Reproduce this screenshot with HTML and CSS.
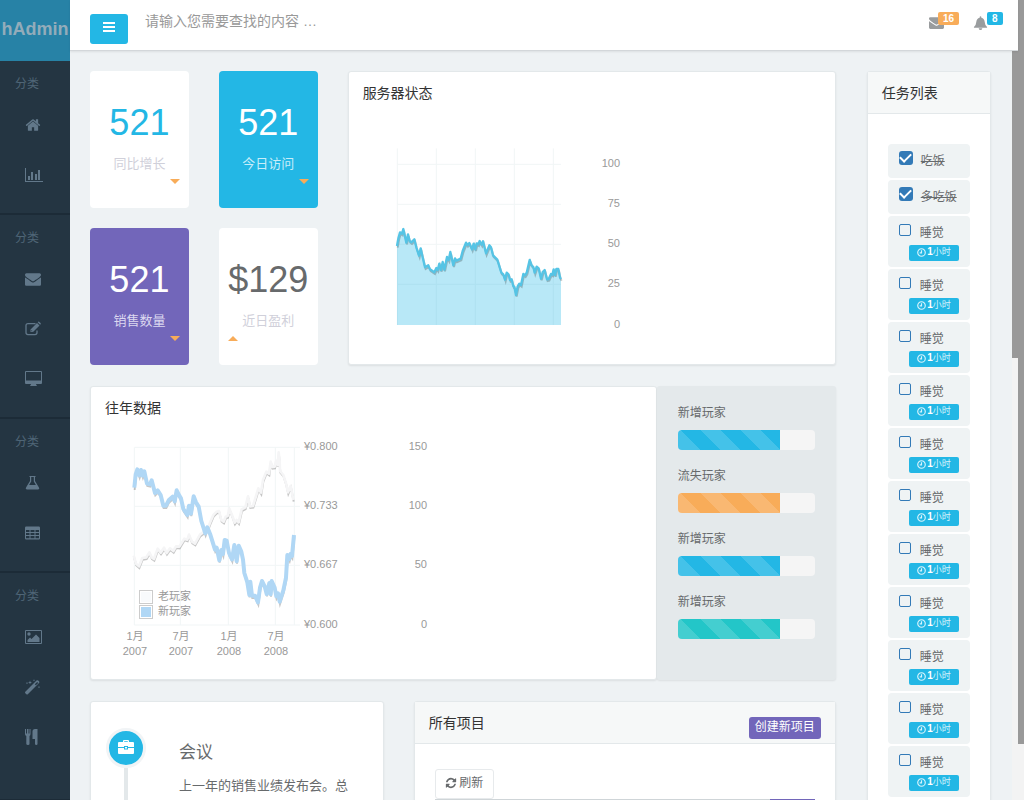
FILE: index.html
```html
<!DOCTYPE html>
<html lang="zh-CN">
<head>
<meta charset="utf-8">
<title>hAdmin</title>
<link rel="stylesheet" href="styles.css">
</head>
<body>
<svg class="defs" aria-hidden="true">
  <symbol id="i-home" viewBox="0 0 1792 1792"><path d="M1472 992v480q0 26-19 45t-45 19h-384v-384h-256v384h-384q-26 0-45-19t-19-45v-480q0-1 .5-3t.5-3l575-474 575 474q1 2 1 6zm223-69l-62 74q-8 9-21 11h-3q-13 0-21-7l-692-577-692 577q-12 8-24 7-13-2-21-11l-62-74q-8-10-7-23.5t11-21.5l719-599q32-26 76-26t76 26l244 204v-195q0-14 9-23t23-9h192q14 0 23 9t9 23v408l219 182q10 8 11 21.5t-7 23.5z"/></symbol>
  <symbol id="i-mail" viewBox="0 0 1792 1792"><path d="M1792 710v794q0 66-47 113t-113 47h-1472q-66 0-113-47t-47-113v-794q44 49 101 87 362 246 497 345 57 42 92.5 65.5t94.5 48 110 24.5h2q51 0 110-24.5t94.5-48 92.5-65.5q170-123 498-345 57-39 100-87zm0-294q0 79-49 151t-122 123q-376 261-468 325-10 7-42.5 31t-54 38.5-52 32.5-57.5 27-50 9h-2q-23 0-50-9t-57.5-27-52-32.5-54-38.5-42.5-31q-91-64-262-182.5t-205-142.5q-62-42-117-115.5t-55-136.5q0-78 41.5-130t118.5-52h1472q65 0 112.5 47t47.5 113z"/></symbol>
  <symbol id="i-refresh" viewBox="0 0 1792 1792"><path d="M1639 1056q0 5-1 7-64 268-268 434.5t-478 166.5q-146 0-282.5-55t-243.5-157l-129 129q-19 19-45 19t-45-19-19-45v-448q0-26 19-45t45-19h448q26 0 45 19t19 45-19 45l-137 137q71 66 161 102t187 36q134 0 250-65t186-179q11-17 53-117 8-23 30-23h192q13 0 22.5 9.5t9.5 22.5zm25-800v448q0 26-19 45t-45 19h-448q-26 0-45-19t-19-45 19-45l138-138q-148-137-349-137-134 0-250 65t-186 179q-11 17-53 117-8 23-30 23h-199q-13 0-22.5-9.5t-9.5-22.5v-7q65-268 270-434.5t480-166.5q146 0 284 55.5t245 156.5l130-129q19-19 45-19t45 19 19 45z"/></symbol>
  <symbol id="i-chart" viewBox="0 0 18 16"><path d="M0 1h1v13h17v1H0zM3 9h2v4H3zM6 5h2v8H6zM10 7h2v6h-2zM13 3h2v10h-2z"/></symbol>
  <symbol id="i-edit" viewBox="0 0 18 16"><path d="M10.500 2.600H3Q1 2.600 1 4.600v7q0 2 2 2h7q2 0 2-2v-2" fill="none" stroke="currentColor" stroke-width="1.300"/><path fill-rule="evenodd" d="M5.500 8.500L12 2l2.500 2.500L8 11H5.500zM12.700 1.300l.5-.5q.6-.4 1.200.1l1.200 1.200q.5.600 0 1.200l-.5.500zM6.300 9v1.200h1.400z"/></symbol>
  <symbol id="i-desktop" viewBox="0 0 18 16"><path fill-rule="evenodd" d="M1 0h15q1 0 1 1v11q0 1-1 1h-5l.5 1.500h.5V15H5v-.5h.5L6 13H1q-1 0-1-1V1q0-1 1-1zm0 1v8.500h15V1z"/></symbol>
  <symbol id="i-flask" viewBox="0 0 16 16"><path fill-rule="evenodd" d="M4.500 1h6v1H10v4l3.800 6.300q1.200 2.200-1 2.200H2.200q-2.200 0-1-2.200L5 6V2h-.5zM6.200 2v4.400L4.100 10h6.800L8.800 6.400V2z"/></symbol>
  <symbol id="i-table" viewBox="0 0 16 16"><path fill-rule="evenodd" d="M1.200 1.500h12.600q1.200 0 1.200 1.200v10.600q0 1.200-1.200 1.200H1.200Q0 14.500 0 13.300V2.700q0-1.200 1.200-1.200zM1 5v2h3.500V5zm4.500 0v2h4V5zm5 0v2H14V5zM1 8v2h3.500V8zm4.500 0v2h4V8zm5 0v2H14V8zM1 11v2.300h3.500V11zm4.500 0v2.300h4V11zm5 0v2.300H14V11z"/></symbol>
  <symbol id="i-image" viewBox="0 0 18 16"><path fill-rule="evenodd" d="M1 1h15q1 0 1 1v12q0 1-1 1H1q-1 0-1-1V2q0-1 1-1zm0 1v12h15V2z"/><path d="M2.500 13v-2L5 8.500 6.500 10l4.500-4.500 3.500 3.500v4z"/><circle cx="4" cy="5" r="1.700"/></symbol>
  <symbol id="i-magic" viewBox="0 0 16 16"><path fill-rule="evenodd" d="M.3 12.800L11.500 1.500q.9-.7 1.700 0l.8.800q.7.800 0 1.700L2.800 15.300q-.7.600-1.400 0l-1.100-1.100q-.6-.7 0-1.400zM9.800 5.300l1 1 2.400-2.400-1-1z"/><path d="M5 1.500l.5 1.500 1.500.5L5.500 4 5 5.500 4.500 4 3 3.500 4.500 3zM9 0l.3.900.9.300-.9.300L9 2.400l-.3-.9-.9-.3.9-.3zM2 3l.3.800.8.300-.8.300L2 5.200l-.3-.8-.8-.3.8-.3zM14 7l.3.800.8.300-.8.300-.3.800-.3-.8-.8-.3.8-.3z"/></symbol>
  <symbol id="i-cutlery" viewBox="0 0 16 16"><path d="M0 0h1v4.500h1V0h1.500v4.500h1V0h1v5q0 1.500-1 2v8q0 1-1.500 1T1.300 15V7Q0 6.500 0 5zM10 0h2.500v15q0 1-1.200 1T10 15v-5H7.500V2.500Q7.500 0 10 0z"/></symbol>
  <symbol id="i-bell" viewBox="0 0 16 16"><path d="M8 .8q.9 0 .9 1v.5q3.300.7 3.600 4.700.2 3.600 2.500 5.300v.7H1v-.7Q3.300 10.600 3.500 7q.3-4 3.600-4.700v-.5q0-1 .9-1zM6 13.500h4Q9.500 15.500 8 15.500T6 13.500z"/></symbol>
  <symbol id="i-case" viewBox="0 0 16 14"><path fill-rule="evenodd" d="M5 2V1q0-1 1-1h4q1 0 1 1v1h4q1 0 1 1v4h-6V6H6v1H0V3q0-1 1-1zm1.200 0h3.600v-.8H6.200zM0 8h6v1.500h4V8h6v5q0 1-1 1H1q-1 0-1-1zm7-1h2v1.500H7z"/></symbol>
  <symbol id="i-clock" viewBox="0 0 10 10"><path d="M5 2.500V5.500H3M5 .8a4.200 4.200 0 1 1 0 8.400a4.200 4.200 0 1 1 0-8.400z" fill="none" stroke="currentColor" stroke-width="1.300"/></symbol>
  <symbol id="i-bars" viewBox="0 0 12 10"><path d="M0 0h12v2H0zM0 4h12v2H0zM0 8h12v2H0z"/></symbol>
</svg>

<div class="app">
  <nav class="sidebar">
    <div class="logo">hAdmin</div>
    <section class="group"><h2>分类</h2>
      <a href="#" aria-label="主页"><svg><use href="#i-home"/></svg></a>
      <a href="#" aria-label="统计图表"><svg class="wide"><use href="#i-chart"/></svg></a></section>
    <section class="group"><h2>分类</h2>
      <a href="#" aria-label="信箱"><svg><use href="#i-mail"/></svg></a>
      <a href="#" aria-label="表单"><svg class="wide"><use href="#i-edit"/></svg></a>
      <a href="#" aria-label="页面"><svg class="wide"><use href="#i-desktop"/></svg></a></section>
    <section class="group"><h2>分类</h2>
      <a href="#" aria-label="UI元素"><svg><use href="#i-flask"/></svg></a>
      <a href="#" aria-label="表格"><svg><use href="#i-table"/></svg></a></section>
    <section class="group"><h2>分类</h2>
      <a href="#" aria-label="相册"><svg class="wide"><use href="#i-image"/></svg></a>
      <a href="#" aria-label="动画"><svg><use href="#i-magic"/></svg></a>
      <a href="#" aria-label="工具"><svg><use href="#i-cutlery"/></svg></a></section>
  </nav>

  <div class="main">
    <header class="topbar">
      <button class="menu-btn" aria-label="菜单"><svg><use href="#i-bars"/></svg></button>
      <input class="search" type="text" placeholder="请输入您需要查找的内容 …" aria-label="搜索">
      <a class="notice" href="#" aria-label="信件"><svg><use href="#i-mail"/></svg><span class="count orange">16</span></a>
      <a class="notice" href="#" aria-label="通知"><svg><use href="#i-bell"/></svg><span class="count blue">8</span></a>
    </header>

    <div class="body">
      <main class="content">
        <div class="left">
          <div class="overview">
            <div class="stat s-white"><strong>521</strong><span>同比增长</span><i class="caret down"></i></div>
            <div class="stat s-blue"><strong>521</strong><span>今日访问</span><i class="caret down"></i></div>
            <section class="panel server">
              <h3 class="title">服务器状态</h3>
              <svg class="chart server-chart" width="250" height="200">
                <g transform="translate(-40 -80) scale(.33333)">
                  <path class="grid" d="M172 265V795M289 265V795M406 265V795M523 265V795M640 265V795M172 313H663M172 433H663M172 553H663M172 673H663"/>
                  <path class="area" d="M171 558L175 535 180 517 186 521 190 507 195 530 199 548 204 523 209 543 214 547 223 538 229 562 237 587 242 565 248 592 255 622 265 616 270 628 283 637 289 624 293 630 298 611 303 630 308 606 313 629 321 591 326 600 331 576 340 616 345 595 349 602 362 596 368 573 378 548 382 555 388 549 396 568 401 551 406 568 410 550 415 553 419 543 425 554 429 544 438 580 448 556 453 562 459 586 472 599 484 638 490 643 495 659 500 638 506 644 510 660 515 658 520 679 523 680 528 705 533 679 538 671 543 675 550 642 555 646 560 638 569 600 575 616 580 621 584 638 590 620 596 625 603 656 608 636 614 630 621 658 626 657 633 642 637 644 641 628 645 645 649 627 655 627 660 652 663 657V795H171z"/>
                  <path class="shade" transform="translate(2 5)" d="M171 558L175 535 180 517 186 521 190 507 195 530 199 548 204 523 209 543 214 547 223 538 229 562 237 587 242 565 248 592 255 622 265 616 270 628 283 637 289 624 293 630 298 611 303 630 308 606 313 629 321 591 326 600 331 576 340 616 345 595 349 602 362 596 368 573 378 548 382 555 388 549 396 568 401 551 406 568 410 550 415 553 419 543 425 554 429 544 438 580 448 556 453 562 459 586 472 599 484 638 490 643 495 659 500 638 506 644 510 660 515 658 520 679 523 680 528 705 533 679 538 671 543 675 550 642 555 646 560 638 569 600 575 616 580 621 584 638 590 620 596 625 603 656 608 636 614 630 621 658 626 657 633 642 637 644 641 628 645 645 649 627 655 627 660 652 663 657"/>
                  <path class="line cyan" d="M171 558L175 535 180 517 186 521 190 507 195 530 199 548 204 523 209 543 214 547 223 538 229 562 237 587 242 565 248 592 255 622 265 616 270 628 283 637 289 624 293 630 298 611 303 630 308 606 313 629 321 591 326 600 331 576 340 616 345 595 349 602 362 596 368 573 378 548 382 555 388 549 396 568 401 551 406 568 410 550 415 553 419 543 425 554 429 544 438 580 448 556 453 562 459 586 472 599 484 638 490 643 495 659 500 638 506 644 510 660 515 658 520 679 523 680 528 705 533 679 538 671 543 675 550 642 555 646 560 638 569 600 575 616 580 621 584 638 590 620 596 625 603 656 608 636 614 630 621 658 626 657 633 642 637 644 641 628 645 645 649 627 655 627 660 652 663 657"/>
                </g>
                <g class="end"><text x="240" y="27">100</text><text x="240" y="67">75</text><text x="240" y="107">50</text><text x="240" y="147">25</text><text x="240" y="188">0</text></g>
              </svg>
            </section>
            <div class="stat s-purple"><strong>521</strong><span>销售数量</span><i class="caret down"></i></div>
            <div class="stat s-white s-grey"><strong>$129</strong><span>近日盈利</span><i class="caret up"></i></div>
          </div>

          <div class="history">
            <section class="panel years">
              <h3 class="title">往年数据</h3>
              <svg class="chart years-chart" width="330" height="232">
                <g transform="translate(-20 -45) scale(.33333)">
                  <path class="grid" d="M133 187V720M271 187V720M415 187V720M556 187V720M613 187V720M133 187H630M133 364H630M133 541H630M133 720H630"/>
                  <path class="shade" transform="translate(1 5)" d="M131 512L138 536 147 544 157 519 169 517 178 502 185 517 192 522 203 491 212 503 222 488 230 504 240 490 250 498 258 484 268 485 283 461 292 464 297 449 306 470 315 476 330 449 342 440 352 434 360 413 370 390 380 380 387 378 394 405 401 410 407 395 413 393 418 371 426 390 434 413 440 405 446 412 455 373 466 367 474 334 480 364 489 363 500 327 505 310 513 323 519 285 529 260 537 266 542 230 547 246 554 245 558 228 563 240 566 206 570 258 580 270 588 295 594 322 602 303 610 345"/>
                  <path class="line pale" d="M131 512L138 536 147 544 157 519 169 517 178 502 185 517 192 522 203 491 212 503 222 488 230 504 240 490 250 498 258 484 268 485 283 461 292 464 297 449 306 470 315 476 330 449 342 440 352 434 360 413 370 390 380 380 387 378 394 405 401 410 407 395 413 393 418 371 426 390 434 413 440 405 446 412 455 373 466 367 474 334 480 364 489 363 500 327 505 310 513 323 519 285 529 260 537 266 542 230 547 246 554 245 558 228 563 240 566 202 569 230 570 258 580 270 588 295 594 322 602 303 610 345"/>
                  <path class="shade" transform="translate(1 7)" d="M133 308L137 268 142 253 148 271 153 255 158 272 163 259 171 296 180 298 185 286 195 324 203 316 212 330 220 362 228 362 236 346 248 335 254 349 260 316 268 332 273 340 280 372 292 390 297 362 303 386 311 334 318 352 326 365 334 408 346 445 352 427 360 446 375 494 380 488 388 526 394 495 399 507 404 465 410 467 417 504 426 523 433 480 440 529 446 482 454 500 459 524 463 564 472 592 478 630 481 590 486 632 495 632 504 652 510 608 516 588 524 604 530 627 538 594 542 628 545 588 554 608 559 634 564 625 569 650 580 616 588 578 592 510 598 522 602 506 606 513 612 450"/>
                  <path class="line sky" d="M133 308L137 268 142 253 148 271 153 255 158 272 163 259 171 296 180 298 185 286 195 324 203 316 212 330 220 362 228 362 236 346 248 335 254 349 260 316 268 332 273 340 280 372 292 390 297 362 303 386 311 334 318 352 326 365 334 408 346 445 352 427 360 446 375 494 380 488 388 526 394 495 399 507 404 465 410 467 417 504 426 523 433 480 440 529 446 482 454 500 459 524 463 564 472 592 478 630 481 590 486 632 495 632 504 652 510 608 516 588 524 604 530 627 538 594 542 628 545 588 554 608 559 634 564 625 569 650 580 616 588 578 592 510 598 522 602 506 606 513 612 450"/>
                </g>
                <rect class="key" x="29.500" y="160.500" width="13" height="13"/><rect class="key" x="29.500" y="175.500" width="13" height="13"/>
                <rect class="key-pale" x="31" y="162" width="10" height="10"/><rect class="key-sky" x="31" y="177" width="10" height="10"/>
                <text class="serif" x="48" y="170">老玩家</text><text class="serif" x="48" y="185">新玩家</text>
                <g class="mid"><text x="25" y="210">1月</text><text x="25" y="225">2007</text><text x="71" y="210">7月</text><text x="71" y="225">2007</text><text x="119" y="210">1月</text><text x="119" y="225">2008</text><text x="166" y="210">7月</text><text x="166" y="225">2008</text></g>
                <text x="194" y="20">¥0.800</text><text x="194" y="79">¥0.733</text><text x="194" y="138">¥0.667</text><text x="194" y="198">¥0.600</text>
                <g class="end"><text x="317" y="20">150</text><text x="317" y="79">100</text><text x="317" y="138">50</text><text x="317" y="198">0</text></g>
              </svg>
            </section>
            <section class="players">
              <p>新增玩家</p><div class="track"><div class="fill blue" style="width:75%"></div></div>
              <p>流失玩家</p><div class="track"><div class="fill orange" style="width:75%"></div></div>
              <p>新增玩家</p><div class="track"><div class="fill blue" style="width:75%"></div></div>
              <p>新增玩家</p><div class="track"><div class="fill teal" style="width:75%"></div></div>
            </section>
          </div>

          <div class="lower">
            <section class="panel timeline">
              <div class="rail"><div class="dot"><svg><use href="#i-case"/></svg></div><div class="stem"></div></div>
              <div class="event"><h2>会议</h2><p>上一年的销售业绩发布会。总</p></div>
            </section>
            <section class="panel projects">
              <div class="panel-head"><h3 class="title">所有项目</h3><button class="create">创建新项目</button></div>
              <div class="project-body">
                <button class="refresh"><svg><use href="#i-refresh"/></svg>刷新</button>
                <div class="find"><input type="text" aria-label="项目名称"><button aria-label="搜索项目"></button></div>
              </div>
            </section>
          </div>
        </div>

        <aside class="panel tasks">
          <div class="panel-head"><h3 class="title">任务列表</h3></div>
          <ul>
            <li class="done"><label><input type="checkbox" checked><span>吃饭</span></label></li>
            <li class="done"><label><input type="checkbox" checked><span>多吃饭</span></label></li>
            <li><label><input type="checkbox"><span>睡觉</span></label><small><svg><use href="#i-clock"/></svg><b>1</b>小时</small></li>
            <li><label><input type="checkbox"><span>睡觉</span></label><small><svg><use href="#i-clock"/></svg><b>1</b>小时</small></li>
            <li><label><input type="checkbox"><span>睡觉</span></label><small><svg><use href="#i-clock"/></svg><b>1</b>小时</small></li>
            <li><label><input type="checkbox"><span>睡觉</span></label><small><svg><use href="#i-clock"/></svg><b>1</b>小时</small></li>
            <li><label><input type="checkbox"><span>睡觉</span></label><small><svg><use href="#i-clock"/></svg><b>1</b>小时</small></li>
            <li><label><input type="checkbox"><span>睡觉</span></label><small><svg><use href="#i-clock"/></svg><b>1</b>小时</small></li>
            <li><label><input type="checkbox"><span>睡觉</span></label><small><svg><use href="#i-clock"/></svg><b>1</b>小时</small></li>
            <li><label><input type="checkbox"><span>睡觉</span></label><small><svg><use href="#i-clock"/></svg><b>1</b>小时</small></li>
            <li><label><input type="checkbox"><span>睡觉</span></label><small><svg><use href="#i-clock"/></svg><b>1</b>小时</small></li>
            <li><label><input type="checkbox"><span>睡觉</span></label><small><svg><use href="#i-clock"/></svg><b>1</b>小时</small></li>
            <li><label><input type="checkbox"><span>睡觉</span></label><small><svg><use href="#i-clock"/></svg><b>1</b>小时</small></li>
          </ul>
        </aside>
      </main>
      <div class="scroll inner"><div class="thumb"></div></div>
    </div>
  </div>
  <div class="scroll outer"><div class="thumb"></div></div>
</div>
</body>
</html>
```

FILE: styles.css
```css
* { box-sizing: border-box; }
body {
  margin: 0;
  font: 13px/18px "Liberation Sans", "Noto Sans CJK SC", sans-serif;
  color: #676a6c;
  background: #eef2f4;
}
h2, h3, p, ul { margin: 0; padding: 0; font-weight: 400; }
button, input { font: inherit; margin: 0; }
button { border: 0; padding: 0; cursor: pointer; }
svg { fill: currentColor; flex: none; }
.defs { display: none; }

.app { display: flex; height: 100vh; overflow: hidden; }

/* sidebar */
.sidebar { flex: 0 0 70px; background: #243542; overflow: hidden; }
.logo {
  height: 61px;
  background: #2782a6;
  color: #93acba;
  font-size: 18px;
  font-weight: 700;
  line-height: 58px;
  text-align: center;
}
.group { padding-bottom: 13px; border-bottom: 2px solid #1c2b37; }
.group:last-child { padding-bottom: 37px; }
.group h2 { height: 39px; padding: 14px 0 0 15px; font-size: 12px; line-height: 18px; color: #4f6576; }
.group a { display: flex; align-items: center; height: 50px; padding-left: 25px; color: #62788a; }
.group svg { width: 16px; height: 16px; }
.group svg.wide { width: 18px; }

/* top bar */
.main { flex: 1; min-width: 0; display: flex; flex-direction: column; }
.topbar {
  display: flex;
  align-items: flex-start;
  height: 51px;
  padding: 0 15px 0 20px;
  background: #fff;
  border-bottom: 1px solid #d3d7da;
  box-shadow: 0 1px 2px rgba(0, 0, 0, .08);
  z-index: 1;
}
.menu-btn { width: 38px; height: 30px; margin-top: 14px; padding-bottom: 2px; border-radius: 3px; background: #23b7e5; color: #fff; }
.menu-btn svg { width: 12px; height: 10px; }
.search { flex: 1; min-width: 0; height: 42px; padding: 0 0 0 17px; border: 0; outline: 0; font-size: 14px; background: none; }
.search::placeholder { color: #999; opacity: 1; }
.notice { position: relative; width: 44px; height: 30px; margin-top: 15px; color: #999c9e; }
.notice + .notice { width: 30px; }
.notice svg { width: 15px; height: 15px; }
.notice + .notice svg { width: 15px; height: 16px; }
.count { position: absolute; left: 9px; top: -3px; padding: 0 5px; border-radius: 2px; color: #fff; font-size: 10px; font-weight: 700; line-height: 13px; }
.notice + .notice .count { left: 14px; }
.blue { background-color: #23b7e5; }
.orange { background-color: #f8ac59; }
.teal { background-color: #23c6c8; }

/* scroll indicators */
.body { flex: 1; min-height: 0; display: flex; }
.scroll { flex: 0 0 6px; background: #f3f3f3; }
.thumb { background: #999; }
.outer .thumb { height: 93%; }
.inner .thumb { height: 41%; }

/* content grid */
.content {
  flex: 1;
  min-width: 0;
  display: grid;
  grid-template-columns: 6fr 1fr;
  gap: 31px;
  align-items: start;
  padding: 20px 21px 0 20px;
  overflow: hidden;
}
.left { display: grid; gap: 21px; min-width: 0; }
.panel { background: #fff; border: 1px solid #e3e8ea; border-radius: 3px; box-shadow: 0 1px 2px rgba(0, 0, 0, .08); min-width: 0; }
.title { font-size: 14px; line-height: 20px; color: #333; }
.overview { display: grid; grid-template-columns: 33fr 33fr 163fr; grid-template-rows: 137px 137px; gap: 20px 30px; }
.server { grid-column: 3; grid-row: 1 / 3; overflow: hidden; }
.server > .title, .years > .title { padding: 11px 0 0 14px; }

.stat { display: flex; flex-direction: column; align-items: center; padding: 32px 9px 0; border-radius: 4px; }
.stat strong { font-size: 36px; font-weight: 400; line-height: 40px; }
.stat span { margin-top: 12px; }
.s-white { background: #fff; color: #d0d0da; }
.s-white strong { color: #23b7e5; }
.s-grey strong { color: #676a6c; }
.s-blue { background: #23b7e5; color: #c8edf9; }
.s-purple { background: #7266ba; color: #dcd8f0; }
.s-blue strong, .s-purple strong { color: #fff; }
.caret { margin-top: 6px; border: 5px solid transparent; }
.caret.down { align-self: flex-end; border-top-color: #f8ac59; border-bottom-width: 0; }
.caret.up { align-self: flex-start; border-bottom-color: #f8ac59; border-top-width: 0; }

/* charts */
.chart { display: block; font-size: 11px; fill: #999; }
.server-chart { margin: 37px 0 0 31px; }
.years-chart { margin: 12px 0 0 19px; }
.grid { fill: none; stroke: #f1f5f6; stroke-width: 3; }
.area { fill: #23b7e5; fill-opacity: .32; }
.line { fill: none; stroke-linejoin: round; }
.cyan { stroke: #55c4e5; stroke-width: 7; }
.sky { stroke: #b0d7f5; stroke-width: 12; }
.pale { stroke: #f5f5f6; stroke-width: 8; }
.shade { fill: none; stroke: #000; stroke-opacity: .22; stroke-width: 6; }
.end { text-anchor: end; }
.mid { text-anchor: middle; }
.serif { font-family: "Noto Sans CJK SC", sans-serif; }
.key { fill: #fff; stroke: #ccc; }
.key-pale { fill: #f8fafc; }
.key-sky { fill: #b0d7f5; }

.history { display: grid; grid-template-columns: 19fr 6fr; height: 294px; }
.players { padding: 18px 21px 0; background: #e4e9eb; border-radius: 3px; box-shadow: 0 1px 2px rgba(0, 0, 0, .08); }
.players p { font-size: 12px; }
.track { height: 20px; margin: 8px 0 17px; border-radius: 4px; background: #f5f5f5; overflow: hidden; }
.fill {
  height: 100%;
  background-image: linear-gradient(45deg, rgba(255,255,255,.15) 25%, transparent 25%, transparent 50%, rgba(255,255,255,.15) 50%, rgba(255,255,255,.15) 75%, transparent 75%);
  background-size: 40px 40px;
  background-position: 23px 0;
}

/* lower row */
.lower { display: grid; grid-template-columns: 293fr 421fr; gap: 30px; align-items: start; }
.timeline { display: flex; gap: 33px; height: 320px; padding: 26px 15px 0; }
.rail { display: flex; flex-direction: column; align-items: center; width: 40px; }
.dot { display: grid; place-items: center; width: 40px; height: 40px; border: 3px solid #f1f4f6; border-radius: 50%; background: #23b7e5; color: #fff; }
.dot svg { width: 16px; height: 14px; margin-bottom: 3px; }
.stem { flex: 1; width: 4px; background: #e3e8ea; }
.event { flex: 1; padding-top: 13px; }
.event h2 { font-size: 17px; line-height: 24px; }
.event p { margin-top: 12px; }
.panel-head { display: flex; align-items: flex-start; justify-content: space-between; height: 42px; padding: 11px 14px 0; background: #f6f8f8; border-bottom: 1px solid #e3e8ea; }
.create { height: 22px; margin-top: 4px; padding: 0 6px 3px; border-radius: 3px; background: #7266ba; color: #fff; font-size: 12px; line-height: 18px; }
.project-body { padding: 25px 20px 20px; }
.refresh { display: flex; align-items: center; justify-content: center; gap: 2px; width: 59px; height: 30px; padding-bottom: 3px; border: 1px solid #e7eaec; border-radius: 3px; background: #fff; color: #676a6c; font-size: 12px; }
.refresh svg { width: 12px; height: 12px; }
.find { display: flex; }
.find input { flex: 1; min-width: 0; height: 30px; border: 1px solid #cfd5d8; }
.find button { width: 45px; background: #7266ba; }

/* tasks */
.tasks ul { display: grid; gap: 2px; padding: 30px 20px; list-style: none; }
.tasks li { display: flex; flex-direction: column; padding: 7px 11px 6px; border-radius: 4px; background: #eff3f4; font-size: 12px; }
.tasks .done { padding-bottom: 7px; text-decoration: line-through; }
.tasks label { display: flex; gap: 9px; line-height: 20px; }
.tasks .done label { gap: 8px; }
.tasks input { flex: none; appearance: none; width: 12px; height: 12px; margin-top: 1px; border: 1px solid #337ab7; border-radius: 2px; background: transparent; }
.tasks input:checked { display: grid; place-items: center; width: 14px; height: 14px; margin-top: 0; border: 0; border-radius: 3px; background: #337ab7; }
.tasks input:checked::after { content: ""; width: 9px; height: 5px; margin-bottom: 3px; border: solid #fff; border-width: 0 0 2px 2px; transform: rotate(-45deg); }
.tasks small { display: flex; align-items: center; justify-content: center; align-self: flex-end; width: 50px; height: 16px; margin-top: 2px; padding-bottom: 2px; border-radius: 2px; background: #23b7e5; color: #d8f3fb; font-size: 9px; line-height: 12px; }
.tasks small svg { width: 9px; height: 9px; margin-right: 1px; }
.tasks small b { font-size: 10px; color: #fff; }
```
